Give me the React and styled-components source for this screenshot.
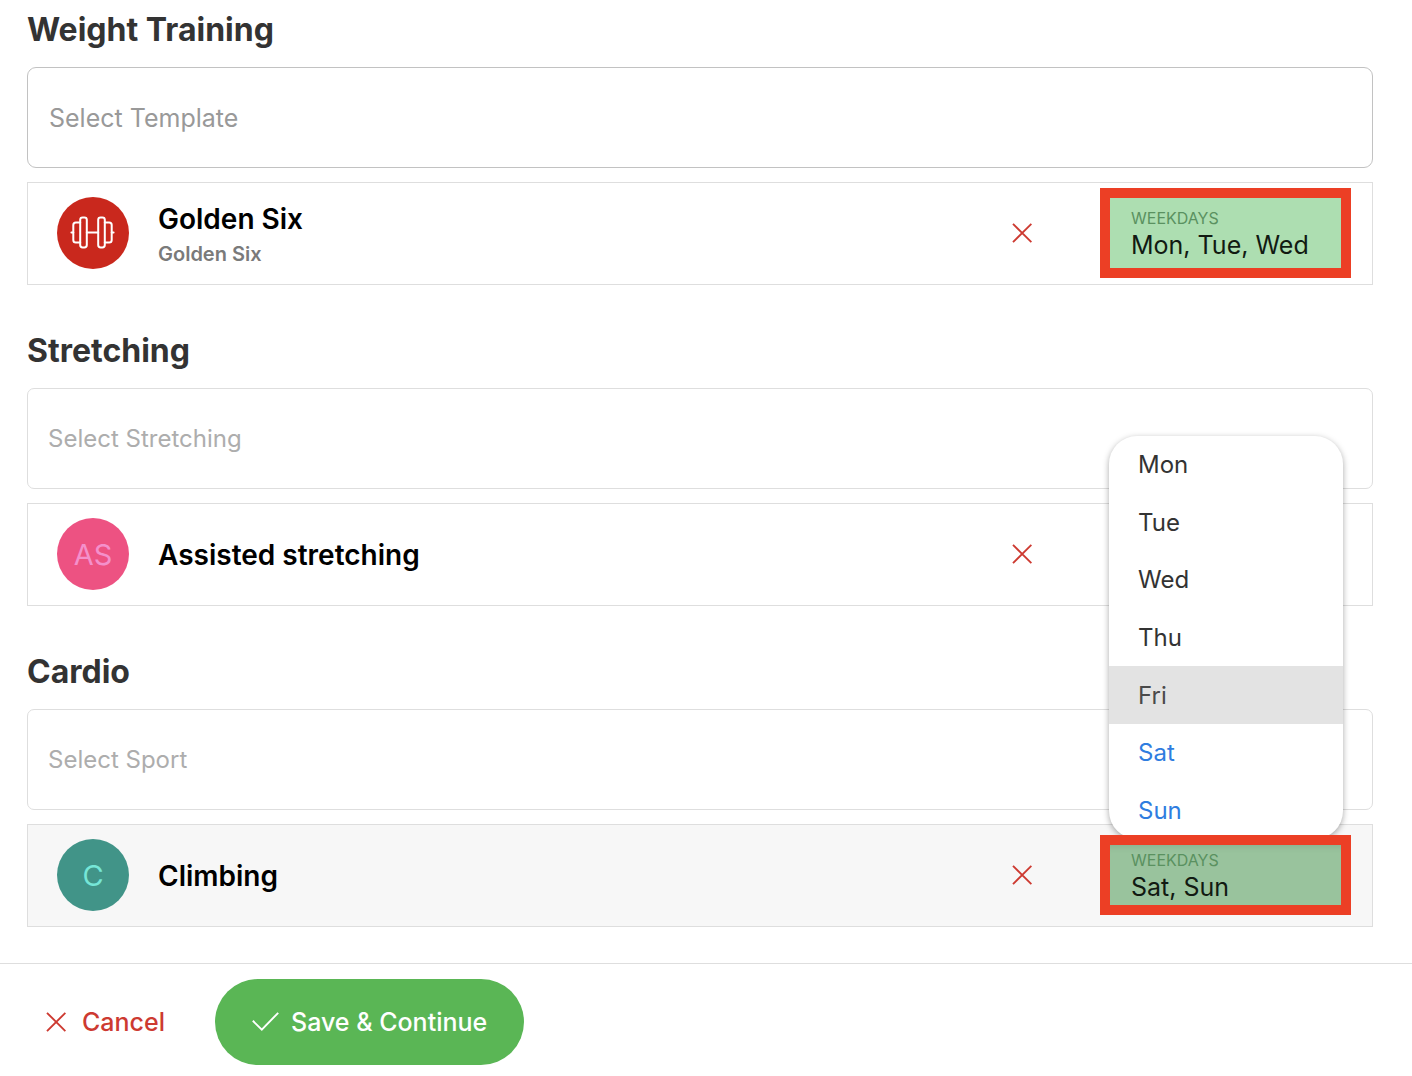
import { useState } from "react";
import styled, { createGlobalStyle, css } from "styled-components";

const sections = [
  {
    id: "weight",
    title: "Weight Training",
    placeholder: "Select Template",
    type: "template",
    item: {
      name: "Golden Six",
      detail: "Golden Six",
      color: "#c9281d",
      days: ["Mon", "Tue", "Wed"],
    },
  },
  {
    id: "stretching",
    title: "Stretching",
    placeholder: "Select Stretching",
    type: "search",
    item: {
      name: "Assisted stretching",
      initials: "AS",
      color: "#ed5282",
      textColor: "#f490cb",
    },
  },
  {
    id: "cardio",
    title: "Cardio",
    placeholder: "Select Sport",
    type: "search",
    item: {
      name: "Climbing",
      initials: "C",
      color: "#419488",
      textColor: "#76e6d7",
      days: ["Sat", "Sun"],
      active: true,
    },
  },
];

const weekdays = ["Mon", "Tue", "Wed", "Thu", "Fri", "Sat", "Sun"];

const CloseIcon = () => (
  <svg width="20" height="20" viewBox="0 0 20 20" fill="none" aria-hidden="true">
    <path d="M1 0.8L19.4 19.2M19.4 0.8L1 19.2" stroke="currentColor" strokeWidth="1.9" />
  </svg>
);

const CheckIcon = () => (
  <svg width="27" height="20" viewBox="0 0 27 20" fill="none" aria-hidden="true">
    <path d="M0.8 8.8L9.8 17.6L26.2 0.8" stroke="currentColor" strokeWidth="1.9" />
  </svg>
);

const DumbbellIcon = () => (
  <svg
    width="46"
    height="34"
    viewBox="0 0 46 34"
    fill="none"
    stroke="#fff"
    strokeWidth="2"
    strokeLinecap="round"
    aria-hidden="true"
  >
    <rect x="10.2" y="1.4" width="6.6" height="30" rx="2.4" />
    <rect x="28.2" y="1.4" width="6.6" height="30" rx="2.4" />
    <path d="M10.2 6.4H5.8Q3.3 6.4 3.3 8.9V23.9Q3.3 26.4 5.8 26.4H10.2" />
    <path d="M34.8 6.4H39.2Q41.7 6.4 41.7 8.9V23.9Q41.7 26.4 39.2 26.4H34.8" />
    <path d="M1.4 16.4H3.3M16.8 16.4H28.2M41.7 16.4H43.6" />
  </svg>
);

const WeekdayPicker = ({ id, days, open, onToggle, onPick }) => (
  <Picker>
    {open && (
      <Menu role="listbox" aria-label="Weekdays">
        {weekdays.map((day) => (
          <Option
            key={day}
            role="option"
            aria-selected={days.includes(day)}
            $selected={days.includes(day)}
            $focused={day === "Fri"}
            onClick={() => onPick(day)}
          >
            {day}
          </Option>
        ))}
      </Menu>
    )}
    <DayButton
      id={id}
      type="button"
      aria-haspopup="listbox"
      aria-expanded={open}
      $open={open}
      onClick={onToggle}
    >
      <DayLabel>WEEKDAYS</DayLabel>
      <DayValue>{days.join(", ")}</DayValue>
    </DayButton>
  </Picker>
);

const Section = ({ section }) => {
  const { id, title, placeholder, type, item } = section;
  const [days, setDays] = useState(item.days || []);
  const [open, setOpen] = useState(Boolean(item.active));

  const pick = (day) =>
    setDays(
      weekdays.filter((d) => (d === day ? !days.includes(d) : days.includes(d)))
    );

  return (
    <section>
      <Title>
        <label htmlFor={id}>{title}</label>
      </Title>
      {type === "template" ? (
        <TemplateSelect id={id} defaultValue="">
          <option value="">{placeholder}</option>
          <option value="golden-six">Golden Six</option>
        </TemplateSelect>
      ) : (
        <SearchInput id={id} type="text" placeholder={placeholder} />
      )}
      <Row $active={item.active}>
        <Avatar $bg={item.color} $color={item.textColor}>
          {item.initials || <DumbbellIcon />}
        </Avatar>
        <Texts>
          <Name>{item.name}</Name>
          {item.detail && <Detail>{item.detail}</Detail>}
        </Texts>
        <RemoveButton type="button" aria-label={`Remove ${item.name}`}>
          <CloseIcon />
        </RemoveButton>
        {item.days ? (
          <WeekdayPicker
            id={`${id}-days`}
            days={days}
            open={open}
            onToggle={() => setOpen(!open)}
            onPick={pick}
          />
        ) : (
          <Picker />
        )}
      </Row>
    </section>
  );
};

const App = () => {
  return (
    <>
      <GlobalStyle />
      <Sections>
        {sections.map((section) => (
          <Section key={section.id} section={section} />
        ))}
      </Sections>
      <Footer>
        <CancelButton type="button">
          <CloseIcon />
          Cancel
        </CancelButton>
        <SaveButton type="button">
          <CheckIcon />
          Save &amp; Continue
        </SaveButton>
      </Footer>
    </>
  );
};

export default App;

const GlobalStyle = createGlobalStyle`
  * {
    box-sizing: border-box;
  }
  body {
    margin: 0;
    background: #fff;
    color: #333;
    font-family: Inter, "Liberation Sans", sans-serif;
  }
  button, input, select {
    font-family: inherit;
  }
  button {
    border: 0;
    background: none;
    cursor: pointer;
  }
`;

const Sections = styled.main`
  display: flex;
  flex-direction: column;
  gap: 46px;
  padding: 10px 39px 36px 27px;
`;

const Title = styled.h2`
  margin: 0 0 17px;
  font-size: 32px;
  font-weight: 700;
  line-height: 40px;
`;

const field = css`
  display: block;
  width: 100%;
  height: 101px;
  margin-bottom: 14px;
  background: #fff;
  outline: none;
`;

const TemplateSelect = styled.select`
  ${field}
  appearance: none;
  padding: 0 21px;
  border: 1px solid #c2c2c2;
  border-radius: 9px;
  color: #999;
  font-size: 25px;
`;

const SearchInput = styled.input`
  ${field}
  padding: 0 20px;
  border: 1px solid #dedede;
  border-radius: 7px;
  color: #333;
  font-size: 24px;
  &::placeholder {
    color: #adadad;
    opacity: 1;
  }
`;

const Row = styled.div`
  display: flex;
  align-items: center;
  height: 103px;
  padding: 0 21px 1px 29px;
  border: 1px solid #dedede;
  background: ${({ $active }) => ($active ? "#f7f7f7" : "#fff")};
`;

const Avatar = styled.div`
  display: flex;
  align-items: center;
  justify-content: center;
  flex-shrink: 0;
  width: 72px;
  height: 72px;
  border-radius: 50%;
  background: ${({ $bg }) => $bg};
  color: ${({ $color }) => $color};
  font-size: 29px;
`;

const Texts = styled.div`
  flex: 1;
  min-width: 0;
  margin-left: 29px;
  padding-top: 2px;
`;

const Name = styled.div`
  color: #000;
  font-size: 28px;
  font-weight: 600;
  line-height: 40px;
`;

const Detail = styled.div`
  color: #7a7a7a;
  font-size: 20px;
  font-weight: 600;
  line-height: 30px;
`;

const RemoveButton = styled.button`
  display: flex;
  align-items: center;
  justify-content: center;
  width: 44px;
  height: 44px;
  margin-right: 56px;
  padding: 0;
  color: #cd3a31;
`;

const Picker = styled.div`
  position: relative;
  width: 251px;
`;

const DayButton = styled.button`
  position: relative;
  z-index: 2;
  display: flex;
  flex-direction: column;
  justify-content: center;
  width: 100%;
  height: ${({ $open }) => ($open ? 80 : 90)}px;
  padding: 0 21px;
  border: 10px solid #ec3f25;
  background: ${({ $open }) => ($open ? "#99c39d" : "#addeb1")};
  box-shadow: ${({ $open }) =>
    $open ? "inset 0 8px 8px -8px rgba(0, 0, 0, 0.14)" : "none"};
  text-align: left;
`;

const DayLabel = styled.span`
  color: #5a9160;
  font-size: 16px;
  line-height: 24px;
`;

const DayValue = styled.span`
  color: #111a12;
  font-size: 25px;
  line-height: 30px;
`;

const Menu = styled.ul`
  position: absolute;
  bottom: calc(100% - 4px);
  left: 9px;
  z-index: 1;
  display: flex;
  flex-direction: column;
  width: 234px;
  height: 403px;
  margin: 0;
  padding: 0;
  overflow: hidden;
  border-radius: 28px;
  background: #fff;
  box-shadow: 0 2px 6px rgba(0, 0, 0, 0.34);
  list-style: none;
`;

const Option = styled.li`
  display: flex;
  align-items: center;
  flex: 1;
  padding: 0 29px;
  background: ${({ $focused }) => ($focused ? "#e3e3e3" : "transparent")};
  color: ${({ $selected, $focused }) =>
    $selected ? "#2f7de0" : $focused ? "#4a4a4a" : "#333"};
  font-size: 24px;
  cursor: pointer;
`;

const Footer = styled.footer`
  display: flex;
  align-items: center;
  padding: 15px 46px 11px;
  border-top: 1px solid #dedede;
`;

const CancelButton = styled.button`
  display: flex;
  align-items: center;
  gap: 16px;
  height: 86px;
  margin-right: 50px;
  padding: 0;
  color: #cd3a31;
  font-size: 25px;
  font-weight: 500;
`;

const SaveButton = styled.button`
  display: flex;
  align-items: center;
  gap: 12px;
  height: 86px;
  padding: 0 37px;
  border-radius: 43px;
  background: #5ab655;
  color: #fff;
  font-size: 25px;
  font-weight: 500;
`;
